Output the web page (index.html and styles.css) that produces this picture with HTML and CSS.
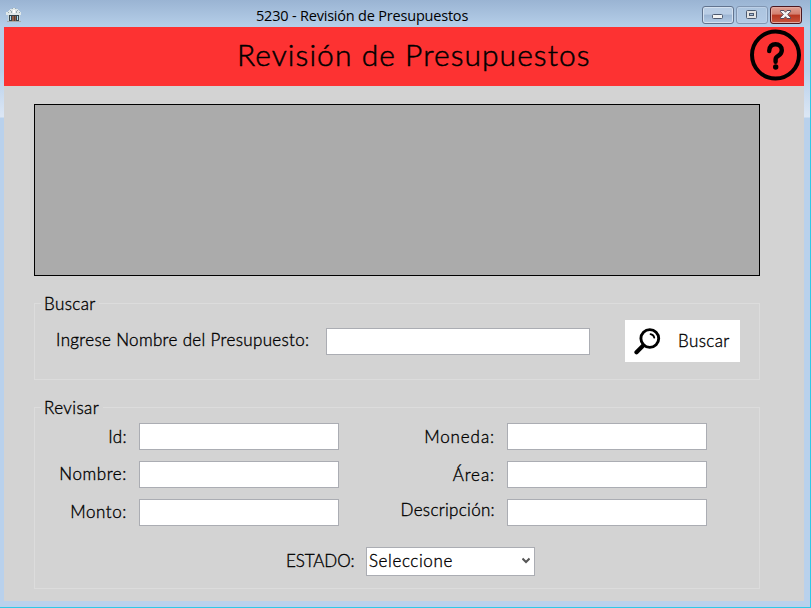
FILE: index.html
```html
<!DOCTYPE html>
<html lang="es">
<head>
<meta charset="utf-8">
<title>5230 - Revisión de Presupuestos</title>
<link rel="stylesheet" href="styles.css">
</head>
<body>
<div class="window">
  <header class="titlebar">
    <svg class="app-icon" width="16" height="15" viewBox="0 0 16 15" shape-rendering="crispEdges">
      <path fill="#dfe8ea" d="M6 0h4v1h2v1h1v1h1v1h1v3H0V4h2V3h1V2h1V1h2z"/>
      <path fill="#9babb2" d="M6 0h1v1H6zM9 0h1v1H9zM4 2h1v1H4zM11 2h1v1h-1zM2 4h1v1H2zM13 4h1v1h-1zM5 3h1v2H5zM10 3h1v2h-1z"/>
      <path fill="#fff" d="M7 2h2v3H7z"/>
      <path fill="#c9d5d8" d="M2 7h12v6H2z"/>
      <path fill="#35454d" d="M3 7h10v6H3z"/>
      <path fill="#b4dcf0" d="M4 8h1v4H4zM11 8h1v4h-1z"/>
      <path fill="#92604a" d="M6 8h4v5H6z"/>
      <path fill="#53433e" d="M8 8h1v5H8z"/>
      <path fill="#a3aaab" d="M1 13h14v1H1z"/>
    </svg>
    <div class="caption"><span>5230 - Revisión de Presupuestos</span></div>
    <div class="controls">
      <div class="ctl"><svg width="32" height="18" viewBox="0 0 32 18"><rect x="10.5" y="8.5" width="10" height="4" rx="1" fill="#f4f4f4" stroke="#4d5a70"/></svg></div>
      <div class="ctl dim"><svg width="32" height="18" viewBox="0 0 32 18"><rect x="10.5" y="4.5" width="10" height="8" rx="1" fill="#e2e2e2" stroke="#4d5a70"/><rect x="13.5" y="7.5" width="4" height="2" fill="#a7bdd8" stroke="#4d5a70"/></svg></div>
      <div class="ctl close"><svg width="32" height="18" viewBox="0 0 32 18"><path d="M10.5 4.5h3.5l1.5 1.8 1.5-1.8h3.5v1.2l-2.8 2.8 2.8 2.8v1.2H17l-1.500-1.800-1.500 1.800h-3.500v-1.200l2.800-2.800-2.800-2.800z" fill="#f2f2f2" stroke="#53485a"/></svg></div>
    </div>
  </header>
  <main class="client">
    <div class="banner">
      <h1>Revisión de Presupuestos</h1>
      <svg class="help" width="52" height="52" viewBox="0 0 52 52">
        <circle cx="25.500" cy="26" r="23.500" fill="none" stroke="#000" stroke-width="4"/>
        <path d="M19.200 22C19.200 17.400 22 15.200 25.500 15.200c3.600 0 6.300 2.600 6.300 6 0 2.800-1.500 4.300-3.300 5.500-2 1.200-2.900 2-2.900 3.800v2.300" fill="none" stroke="#000" stroke-width="4.400" stroke-linecap="round"/>
        <circle cx="25.700" cy="38" r="2.700"/>
      </svg>
    </div>
    <div class="content">
      <div class="datagrid"></div>
      <section class="group search">
        <h2 class="legend">Buscar</h2>
        <label class="query" for="q">Ingrese Nombre del Presupuesto:</label>
        <input id="q" type="text">
        <button class="search-btn">
          <svg width="28" height="28" viewBox="0 0 28 28" fill="none" stroke="#000" stroke-linecap="round">
            <circle cx="15.800" cy="11.500" r="8.900" stroke-width="2.900"/>
            <path d="M16.500 7.200c2 .3 3.400 1.700 3.800 3.500" stroke-width="1.700"/>
            <path d="M9.200 18.500L2.500 25.200" stroke-width="4.200"/>
          </svg>
          <span>Buscar</span>
        </button>
      </section>
      <section class="group review">
        <h2 class="legend">Revisar</h2>
        <div class="fields">
          <div class="column">
            <label for="a">Id:</label><input id="a" type="text">
            <label class="nombre" for="c">Nombre:</label><input id="c" type="text">
            <label class="monto" for="e">Monto:</label><input id="e" type="text">
          </div>
          <div class="column right">
            <label class="moneda" for="b">Moneda:</label><input id="b" type="text">
            <label class="area" for="d">Área:</label><input id="d" type="text">
            <label class="desc" for="f">Descripción:</label><input id="f" type="text">
          </div>
        </div>
        <div class="state">
          <span class="estado">ESTADO:</span>
          <div class="select"><span>Seleccione</span>
            <svg width="8" height="7" viewBox="0 0 8 7"><path d="M0.500 1.500L4 5 7.500 1.500" fill="none" stroke="#555" stroke-width="2"/></svg>
          </div>
        </div>
      </section>
    </div>
  </main>
</div>
</body>
</html>
```
FILE: styles.css
```css
* { box-sizing: border-box; }
body { margin: 0; overflow: hidden; font: 300 17px/20px Lato, "Liberation Sans", sans-serif; letter-spacing: 0.400px; color: #000; }
h1, h2 { margin: 0; font-weight: inherit; }
.window {
  width: 811px; height: 608px; padding: 0 6px 6px 4px;
  border-right: 1px solid #2fc8e6; border-bottom: 1px solid #2fc8e6;
  background: linear-gradient(#9ab4d3 0, #b6cfe9 27px, #b7cfea 70px, #dce7f5 117px, #b9d1ec 118px);
}
.titlebar { display: flex; height: 27px; }
.app-icon { margin: 8px 0 0 2px; flex: none; }
.caption { flex: 1; padding: 6px 0 0 234px; font: 14.500px/20px "Open Sans", sans-serif; white-space: nowrap; }
.caption span { letter-spacing: -0.200px; }
.controls { display: flex; gap: 2px; padding: 6px 2px 0 0; }
.ctl {
  width: 32px; height: 18px; border: 1px solid #62748f; border-radius: 3px;
  box-shadow: inset 0 0 0 1px #d4e1f0;
  background: linear-gradient(#b9cde5 45%, #9cb5d3 50%, #b3cae5);
}
.ctl svg { display: block; margin: -1px; }
.dim { border-color: #8297b3; box-shadow: inset 0 0 0 1px #bdd0e7; background: linear-gradient(#acc4df, #b3cae5); }
.close { border-color: #4a1720; box-shadow: inset 0 0 0 1px #e2aaa0; background: linear-gradient(#e0a095 0, #d37e6e 45%, #b73620 50%, #c8543d); }
.client { height: 574px; background: #d3d3d3; -webkit-text-stroke: 0.350px #000; }
.banner { display: flex; height: 59px; background: #fd3232; }
h1 { flex: 1; padding: 8px 0 0 233px; font-size: 30px; line-height: 38px; white-space: nowrap; letter-spacing: 1.050px; -webkit-text-stroke-width: 0.500px; }
.help { flex: none; margin: 2px 2px 0 0; }
.content { padding: 18px 44px 0 30px; }
.datagrid { height: 172px; border: 1px solid #000; background: #ababab; }
.group { border: 1px solid #dcdcdc; }
.legend { width: 58px; height: 20px; margin: -10px 0 0 6px; padding-left: 3px; font-size: 17px; line-height: 20px; background: #d3d3d3; }
.search { display: grid; grid-template: 16px 42px / 291px 299px 115px; height: 77px; margin-top: 27px; }
.search .legend { grid-row: 1; grid-column: 1; }
.query { grid-row: 2; padding: 10px 0 0 21px; white-space: nowrap; letter-spacing: 0.340px; }
input { display: block; height: 27px; padding: 0 4px; border: 1px solid #abadb3; border-radius: 0; background: #fff; font: inherit; outline: 0; }
.search input { grid-row: 2; width: 264px; margin-top: 8px; }
.search-btn { grid-row: 2; display: flex; align-items: center; gap: 16px; padding: 0 0 0 9px; border: 0; background: #fff; color: #000; font: inherit; letter-spacing: inherit; }
.review { height: 182px; margin-top: 27px; }
.review .legend { width: 62px; }
.fields { display: flex; margin-top: 5px; }
.column { display: grid; grid-template: repeat(3, 27px) / 92px 200px; column-gap: 12px; row-gap: 11px; }
.right { grid-template-columns: 156px 200px; }
.fields label { padding-top: 4px; text-align: right; white-space: nowrap; }
.fields .nombre, .fields .monto { padding-top: 3px; letter-spacing: 0.600px; }
.fields .moneda, .fields .area { letter-spacing: 0.900px; }
.fields .desc { padding-top: 1px; letter-spacing: 0.300px; }
.state { display: flex; margin: 21px 0 0 251px; }
.estado { width: 80px; padding-top: 4px; letter-spacing: -0.100px; }
.select { display: flex; align-items: center; justify-content: space-between; width: 169px; height: 29px; padding: 0 4px 2px 2px; border: 1px solid #abadb3; background: #fff; letter-spacing: 0.600px; }
```
